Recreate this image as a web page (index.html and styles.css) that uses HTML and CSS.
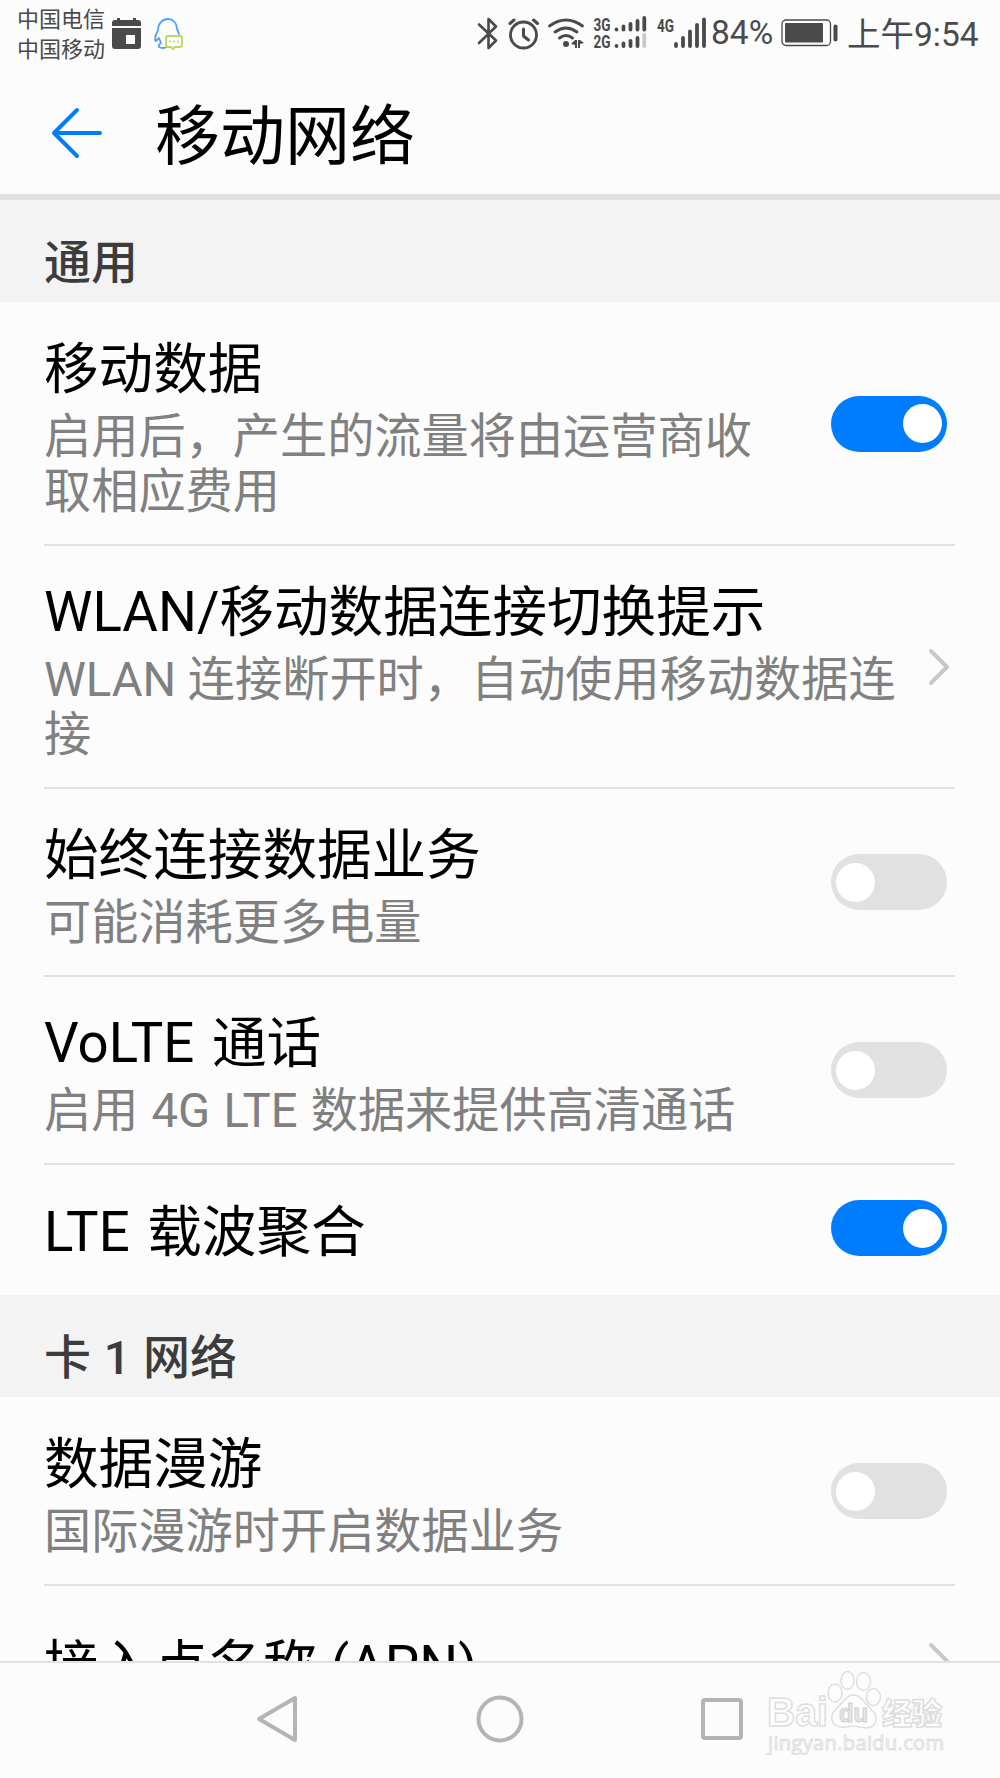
FILE: index.html
```html
<!DOCTYPE html>
<html lang="zh-CN">
<head>
  <meta charset="UTF-8">
  <meta name="viewport" content="width=device-width, initial-scale=1.0">
  <title>移动网络</title>
  <link rel="stylesheet" href="styles.css">
</head>
<body>
  <div class="status-bar">
    <div class="carriers">
      <span>中国电信</span>
      <span>中国移动</span>
    </div>
    <!-- calendar + messenger notifications -->
    <svg class="notifications" width="76" height="70" viewBox="108 0 76 70">
      <path fill="#4a4a4a" d="M112 26v-3q0-3 3-3h2v-2h3v2h13v-2h3v2h2q3 0 3 3v3zM112 28h29v18q0 3-3 3h-23q-3 0-3-3zM126 35v9h9v-9z" fill-rule="evenodd"/>
      <g fill="none" stroke-width="1.8" stroke-linejoin="round" stroke-linecap="round">
        <path stroke="#4fa3f7" d="M179 34q-1-3-2-5c0-6-4-10-9-10s-10 4-10 11q-3 5-3 10l1 1 3-3 2 5q-3 2-2 4 4 2 8 0"/>
        <path stroke="#b9d957" d="M168 36h12q2 0 2 2v7q0 2-2 2h-5l-2 2-2-2h-3q-2 0-2-2v-7q0-2 2-2z"/>
        <path stroke="#b9d957" d="M170 41.500h.1M174 41.500h.1M178 41.500h.1"/>
      </g>
    </svg>
    <!-- bluetooth, alarm, wifi, signal -->
    <svg class="signals" width="240" height="70" viewBox="470 0 240 70">
      <g fill="none" stroke="#4a4a4a" stroke-linecap="round" stroke-linejoin="round">
        <path stroke-width="2.600" d="M479 24.500l17 16-7.500 7.500V19l7.500 7.500-17 16.500"/>
        <circle cx="523.500" cy="35" r="13" stroke-width="2.800"/>
        <path stroke-width="3" d="M523.500 29v7l5 4"/>
        <path stroke-width="3" d="M510 23.500l4-3.500M537.500 23.500l-4-3.500"/>
        <path stroke-width="2.900" d="M549.500 26q16.500-12 33 0M555 32q11-8 22 0M559.500 38q6.500-5 13 0"/>
      </g>
      <g fill="#4a4a4a">
        <circle cx="566" cy="44" r="3"/>
        <path d="M571 44l4-4h2v8h-2v-3zM584 43l-4 1v4h-2v-8h2z"/>
        <text class="net" x="593.500" y="31" textLength="17" lengthAdjust="spacingAndGlyphs">3G</text>
        <text class="net" x="593.500" y="48" textLength="17" lengthAdjust="spacingAndGlyphs">2G</text>
        <text class="net" x="657" y="31.500" textLength="17" lengthAdjust="spacingAndGlyphs">4G</text>
      </g>
      <g stroke="#4a4a4a" stroke-width="3.800" stroke-linecap="round">
        <path d="M616.500 29.500v.1M623.500 26.500v3M630.500 24v5.500M637.500 21v8.500M644.300 18v11.500"/>
        <path d="M616.500 46v.1M623.500 43.500v2.500M630.500 41v5M637.500 38v8"/>
        <path stroke="#c8c8c8" d="M644.300 35v11"/>
        <path d="M676 44v2M683 38v8M690 31.500v14.500M697 25v21M704 19.500v26.500"/>
      </g>
    </svg>
    <span class="battery-level">84%</span>
    <svg class="battery" width="58" height="30" viewBox="0 0 58 30">
      <rect x="1" y="2" width="48.500" height="25.500" rx="4" fill="none" stroke="#4a4a4a" stroke-width="1.300"/>
      <rect x="4" y="5" width="38" height="19.500" rx="1" fill="#4a4a4a"/>
      <rect x="52.500" y="6.500" width="4" height="17" rx="2" fill="#4a4a4a"/>
    </svg>
    <span class="clock">上午9:54</span>
  </div>

  <header class="header">
    <svg class="back" width="52" height="52" viewBox="0 0 52 52">
      <path d="M26 3L3 26l23 23M3 26h46" fill="none" stroke="#007dff" stroke-width="4" stroke-linecap="round" stroke-linejoin="round"/>
    </svg>
    <h1>移动网络</h1>
  </header>

  <main class="settings">
    <h2 class="section">通用</h2>
    <div class="row">
      <div class="text">
        <div class="title">移动数据</div>
        <div class="summary">启用后，产生的流量将由运营商收取相应费用</div>
      </div>
      <span class="toggle on"></span>
    </div>
    <div class="row link">
      <div class="text">
        <div class="title">WLAN/移动数据连接切换提示</div>
        <div class="summary">WLAN 连接断开时，自动使用移动数据连接</div>
      </div>
      <svg class="chevron" width="22" height="38" viewBox="0 0 22 38">
        <path d="M3 3l16 16L3 35"/>
      </svg>
    </div>
    <div class="row">
      <div class="text">
        <div class="title">始终连接数据业务</div>
        <div class="summary">可能消耗更多电量</div>
      </div>
      <span class="toggle"></span>
    </div>
    <div class="row lte">
      <div class="text">
        <div class="title">VoLTE 通话</div>
        <div class="summary">启用 4G LTE 数据来提供高清通话</div>
      </div>
      <span class="toggle"></span>
    </div>
    <div class="row lte single">
      <div class="text">
        <div class="title">LTE 载波聚合</div>
      </div>
      <span class="toggle on"></span>
    </div>
    <h2 class="section">卡 1 网络</h2>
    <div class="row">
      <div class="text">
        <div class="title">数据漫游</div>
        <div class="summary">国际漫游时开启数据业务</div>
      </div>
      <span class="toggle"></span>
    </div>
    <div class="row link apn">
      <div class="text">
        <div class="title">接入点名称 (APN)</div>
      </div>
      <svg class="chevron" width="22" height="38" viewBox="0 0 22 38">
        <path d="M3 3l16 16L3 35"/>
      </svg>
    </div>
  </main>

  <nav class="nav-bar">
    <svg width="48" height="48" viewBox="0 0 48 48"><path d="M41 3v42L5 24z"/></svg>
    <svg width="48" height="48" viewBox="0 0 48 48"><circle cx="24" cy="24" r="21.500"/></svg>
    <svg width="48" height="48" viewBox="0 0 48 48"><rect x="5" y="5" width="38" height="38" rx="2"/></svg>
  </nav>

  <svg class="watermark" width="190" height="90" viewBox="760 1665 190 90">
    <g class="outline">
      <text class="logo" x="767" y="1726" textLength="61" lengthAdjust="spacingAndGlyphs">Bai</text>
      <ellipse cx="835" cy="1693" rx="7" ry="9"/>
      <ellipse cx="847.500" cy="1680.500" rx="6.500" ry="9"/>
      <ellipse cx="863.500" cy="1681.500" rx="7" ry="9"/>
      <ellipse cx="873.500" cy="1697" rx="7" ry="8.500"/>
      <path d="M854 1695c7 0 10 8 17 14 9 9 5 18-4 19-7 0-9-2-14-2s-8 2-13 1c-9-2-11-11-4-18 7-6 10-14 18-14z"/>
      <text class="logo-cn" x="882" y="1724" textLength="60">经验</text>
      <text class="site" x="768" y="1750" textLength="176">jingyan.baidu.com</text>
    </g>
    <text class="du" x="839" y="1722" textLength="29" lengthAdjust="spacingAndGlyphs">du</text>
  </svg>
</body>
</html>
```
FILE: styles.css
```css
* {
  box-sizing: border-box;
}
body {
  margin: 0;
  height: 1778px;
  display: flex;
  flex-direction: column;
  overflow: hidden;
  position: relative;
  background-color: #fcfcfc;
  color: #000;
  font-family: Roboto, "Noto Sans CJK SC", sans-serif;
}
h1, h2 {
  margin: 0;
  font-weight: 400;
}
svg {
  flex: none;
  display: block;
}
.status-bar {
  display: flex;
  align-items: center;
  height: 70px;
  padding: 0 21px 0 17px;
  color: #4a4a4a;
  white-space: nowrap;
}
.carriers {
  display: flex;
  flex-direction: column;
  width: 91px;
  font-size: 22px;
  line-height: 30px;
}
.signals {
  margin-left: auto;
}
.net {
  font-size: 18px;
  font-family: Roboto, sans-serif;
  font-weight: 700;
}
.battery-level {
  width: 71px;
  padding-left: 1px;
  font-size: 33.5px;
  line-height: 70px;
  height: 74px;
}
.battery {
  margin-top: -4px;
}
.clock {
  width: 132px;
  height: 70px;
  margin-left: 8px;
  font-size: 33.5px;
  line-height: 69px;
}
.header {
  display: flex;
  align-items: center;
  height: 130px;
  padding: 2px 51px 0;
  border-bottom: 6px solid #e1e1e1;
}
.header h1 {
  margin-left: 52px;
  padding-top: 8px;
  font-size: 65px;
  line-height: 80px;
}
.settings {
  flex: 1;
  min-height: 0;
  overflow: hidden;
}
.section {
  height: 102px;
  margin-bottom: 1px;
  padding: 25px 44px 0;
  background-color: #f3f3f3;
  color: #3c3c3c;
  font-size: 47px;
  font-weight: 500;
  line-height: 76px;
  word-spacing: 1px;
}
.row {
  display: flex;
  align-items: center;
  justify-content: space-between;
  margin: 0 45px 0 44px;
  padding: 34px 8px 24px 0;
  border-bottom: 2px solid #e1e1e1;
}
.title {
  font-size: 54.6px;
  line-height: 64px;
  white-space: nowrap;
}
.summary {
  margin-top: 9px;
  font-size: 47.2px;
  line-height: 55px;
  color: #808080;
}
.lte .title {
  word-spacing: 4px;
}
.lte .summary {
  word-spacing: 1.5px;
}
.text {
  width: 720px;
}
.link {
  padding-right: 5px;
}
.link .text {
  width: 860px;
}
.single {
  height: 130px;
  padding-top: 30px;
  padding-bottom: 26px;
  border-bottom: none;
}
.apn {
  padding-top: 48px;
}
.toggle {
  flex: none;
  width: 116px;
  height: 56px;
  margin-top: -10px;
  padding: 8.5px 5px;
  border-radius: 28px;
  background-color: #e1e1e1;
}
.toggle::before {
  content: "";
  display: block;
  width: 39px;
  height: 39px;
  border-radius: 50%;
  background-color: #fff;
}
.toggle.on {
  background-color: #007dff;
}
.toggle.on::before {
  margin-left: auto;
}
.single .toggle {
  margin-top: -8px;
}
.chevron {
  margin-top: -10px;
  fill: none;
  stroke: #c8c8c8;
  stroke-width: 4;
  stroke-linecap: round;
  stroke-linejoin: round;
}
.nav-bar {
  display: flex;
  justify-content: center;
  align-items: center;
  gap: 174px;
  height: 117px;
  padding-bottom: 3px;
  border-top: 2px solid #e1e1e1;
  background-color: #fcfcfc;
}
.nav-bar svg {
  fill: none;
  stroke: #b4b4b4;
  stroke-width: 4;
  stroke-linejoin: round;
}
.watermark {
  position: absolute;
  left: 760px;
  top: 1665px;
}
.outline {
  fill: #fdfdfd;
  stroke: #dedede;
  stroke-width: 1.5;
}
.logo {
  font: 700 40px "Liberation Sans", sans-serif;
}
.logo-cn {
  font: 900 30px "Noto Sans CJK SC", sans-serif;
}
.site {
  font: 400 20px "Open Sans", sans-serif;
  stroke-width: 1;
}
.du {
  fill: #e6e6e6;
  stroke: #cfcfcf;
  stroke-width: 1;
  font: 700 26px "Liberation Sans", sans-serif;
}
```
